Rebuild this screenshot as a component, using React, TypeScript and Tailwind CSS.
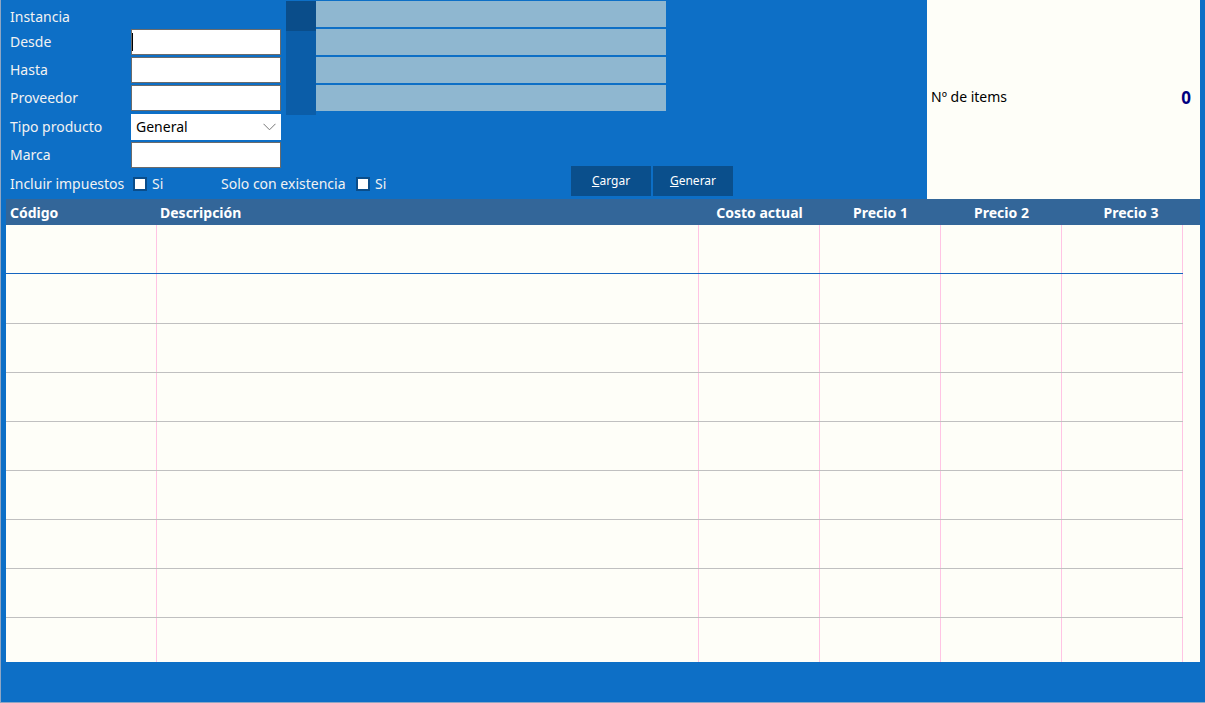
import React from "react";

const font = { fontFamily: '"Noto Sans", "Open Sans", sans-serif' };

const Field = ({ caret }: { caret?: boolean }) => (
  <div className="w-[150px] h-[26px] shrink-0 bg-white border border-[#6b6b6b] flex items-center">
    {caret && <span className="block w-[1px] h-[18px] bg-black" />}
  </div>
);

const Row = ({ label, children }: { label: string; children?: React.ReactNode }) => (
  <div className="flex items-center h-[26px]">
    <span className="w-[121px] shrink-0 text-[14px] text-[#f2f2f2] leading-none">{label}</span>
    {children}
  </div>
);

const Check = () => <span className="block shrink-0 w-[14px] h-[14px] bg-white border-2 border-[#0a4d8a]" />;

const cols = [
  { name: "Código", w: "w-[151px]", align: "justify-start pl-[4px]" },
  { name: "Descripción", w: "w-[542px]", align: "justify-start pl-[3px]" },
  { name: "Costo actual", w: "w-[121px]", align: "justify-center" },
  { name: "Precio 1", w: "w-[121px]", align: "justify-center" },
  { name: "Precio 2", w: "w-[121px]", align: "justify-center" },
];

const bodyCols = ["w-[151px]", "w-[542px]", "w-[121px]", "w-[121px]", "w-[121px]", "w-[121px]"];

const rows = [
  { h: "h-[49px]", line: "border-b border-[#1565c0]" },
  { h: "h-[50px]", line: "border-b border-[#c0c0c0]" },
  { h: "h-[49px]", line: "border-b border-[#c0c0c0]" },
  { h: "h-[49px]", line: "border-b border-[#c0c0c0]" },
  { h: "h-[49px]", line: "border-b border-[#c0c0c0]" },
  { h: "h-[49px]", line: "border-b border-[#c0c0c0]" },
  { h: "h-[49px]", line: "border-b border-[#c0c0c0]" },
  { h: "h-[49px]", line: "border-b border-[#c0c0c0]" },
  { h: "h-[44px]", line: "" },
];

export default function App() {
  return (
    <div style={font} className="w-[1205px] h-[703px] bg-[#0d6fc6] border-l border-b border-[#8fa6c4] flex flex-col overflow-hidden">
      {/* top area */}
      <div className="h-[199px] flex">
        {/* form */}
        <div className="w-[285px] shrink-0 pl-[9px] pt-[4px] flex flex-col">
          <div className="h-[25px] flex items-center text-[14px] text-[#f2f2f2] leading-none">Instancia</div>
          <div className="flex flex-col gap-[2px]">
            <Row label="Desde"><Field caret /></Row>
            <Row label="Hasta"><Field /></Row>
            <Row label="Proveedor"><Field /></Row>
          </div>
          <div className="mt-[3px] flex flex-col gap-[2px]">
            <Row label="Tipo producto">
              <div className="w-[150px] h-[26px] shrink-0 bg-white flex items-center justify-between pl-[5px] pr-[5px]">
                <span className="text-[14px] text-black leading-none">General</span>
                <svg width="13" height="8" viewBox="0 0 13 8">
                  <path d="M0.5 0.8 L6.5 6.8 L12.5 0.8" fill="none" stroke="#777" strokeWidth="1" />
                </svg>
              </div>
            </Row>
            <Row label="Marca"><Field /></Row>
          </div>
          <div className="mt-[4px] h-[24px] flex items-center text-[14px] text-[#f2f2f2] leading-none whitespace-nowrap">
            <div className="w-[211px] shrink-0 flex items-center">
              <span className="w-[123px] shrink-0">Incluir impuestos</span>
              <Check />
              <span className="ml-[5px]">Si</span>
            </div>
            <span className="w-[135px] shrink-0">Solo con existencia</span>
            <Check />
            <span className="ml-[5px]">Si</span>
          </div>
        </div>

        {/* middle */}
        <div className="w-[641px] shrink-0 flex flex-col pt-[1px]">
          <div className="flex">
            <div className="w-[30px] h-[114px] flex flex-col">
              <div className="h-[30px] bg-[#0a4d8a]" />
              <div className="flex-1 bg-[#0b5da8]" />
            </div>
            <div className="w-[350px] flex flex-col gap-[2px]">
              <div className="h-[26px] bg-[#8fb7d0]" />
              <div className="h-[26px] bg-[#8fb7d0]" />
              <div className="h-[26px] bg-[#8fb7d0]" />
              <div className="h-[26px] bg-[#8fb7d0]" />
            </div>
          </div>
          <div className="mt-auto mb-[3px] ml-[285px] flex gap-[2px]">
            <button className="w-[80px] h-[30px] bg-[#0a4f8c] text-white text-[12px]">
              <span className="underline">C</span>argar
            </button>
            <button className="w-[80px] h-[30px] bg-[#0a4f8c] text-white text-[12px]">
              <span className="underline">G</span>enerar
            </button>
          </div>
        </div>

        {/* info panel */}
        <div className="w-[273px] shrink-0 bg-[#fefef8] flex items-center justify-between pl-[4px] pr-[9px] pb-[6px]">
          <span className="text-[14px] text-black">Nº de items</span>
          <span className="text-[17px] font-bold text-[#000080] mt-[3px]">0</span>
        </div>
      </div>

      {/* grid */}
      <div className="ml-[5px] mr-[5px] flex flex-col">
        <div className="h-[26px] bg-[#336699] flex text-white text-[14px] font-bold">
          {cols.map((c) => (
            <div key={c.name} className={`${c.w} flex items-center ${c.align}`}>{c.name}</div>
          ))}
          <div className="flex-1 flex items-center justify-center">Precio 3</div>
        </div>
        <div className="h-[437px] bg-[#fefef8] flex flex-col">
          {rows.map((r, i) => (
            <div key={i} className="flex">
              <div className={`flex ${r.h} ${r.line}`}>
                {bodyCols.map((w, j) => (
                  <div key={j} className={`${w} h-full border-r border-[#ffc4e4]`} />
                ))}
              </div>
            </div>
          ))}
        </div>
      </div>
    </div>
  );
}
